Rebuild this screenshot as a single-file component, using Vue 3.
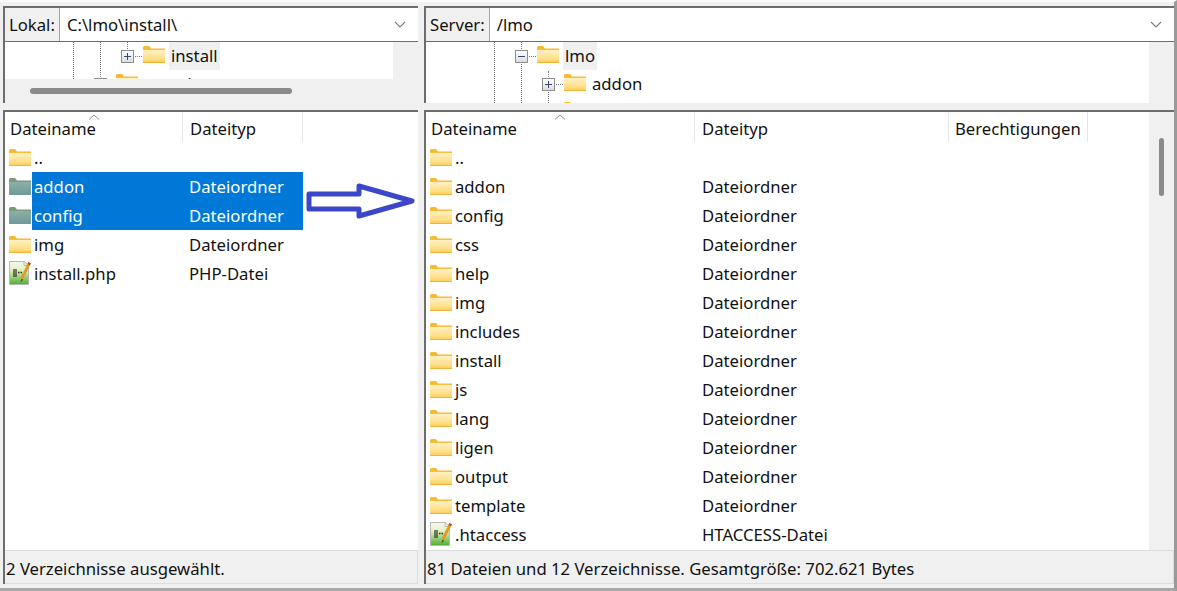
<script setup>
const localFiles = [
  { name: '..', type: '', icon: 'folder' },
  { name: 'addon', type: 'Dateiordner', icon: 'folder', selected: true },
  { name: 'config', type: 'Dateiordner', icon: 'folder', selected: true },
  { name: 'img', type: 'Dateiordner', icon: 'folder' },
  { name: 'install.php', type: 'PHP-Datei', icon: 'file' }
];

const serverFiles = [
  { name: '..', type: '', icon: 'folder' },
  ...['addon', 'config', 'css', 'help', 'img', 'includes', 'install', 'js', 'lang', 'ligen', 'output', 'template'].map(name => ({
    name,
    type: 'Dateiordner',
    icon: 'folder'
  })),
  { name: '.htaccess', type: 'HTACCESS-Datei', icon: 'file' }
];
</script>

<template>
  <div class="window">
    <svg class="defs" width="0" height="0">
      <defs>
        <linearGradient id="fold" x1="0" y1="0" x2="0" y2="1">
          <stop offset="0" stop-color="#fff3cf" />
          <stop offset="0.7" stop-color="#ffdf85" />
          <stop offset="1" stop-color="#fbc94f" />
        </linearGradient>
        <linearGradient id="foldSel" x1="0" y1="0" x2="0" y2="1">
          <stop offset="0" stop-color="#8fb0a8" />
          <stop offset="1" stop-color="#6f9a9a" />
        </linearGradient>
        <linearGradient id="sheet" x1="0" y1="0" x2="0" y2="1">
          <stop offset="0" stop-color="#f7f7f2" />
          <stop offset="0.35" stop-color="#e6f2c4" />
          <stop offset="1" stop-color="#4fae30" />
        </linearGradient>
        <symbol id="folder" viewBox="0 0 22 17">
          <path d="M0 1.5Q0 0 1.5 0H6L8 2.5H22V5H0Z" fill="#f7b92f" />
          <path d="M0 3H22V17H0Z" fill="url(#fold)" />
          <path d="M0 16H22V17H0Z" fill="#efb43a" />
          <path d="M0 3H22V4H0Z" fill="#f7bd3c" />
        </symbol>
        <symbol id="folderSel" viewBox="0 0 22 17">
          <path d="M0 1.5Q0 0 1.5 0H6L8 2.5H22V5H0Z" fill="#7a9a7c" />
          <path d="M0 3H22V17H0Z" fill="url(#foldSel)" />
          <path d="M0 3H22V4H0Z" fill="#7b9a80" />
        </symbol>
        <symbol id="file" viewBox="0 0 22 24">
          <path d="M0.5 0.5H15L19.5 4.5V23.5H0.5Z" fill="url(#sheet)" stroke="#b8b8b8" />
          <path d="M15 0.5V4.5H19.5" fill="none" stroke="#b8b8b8" />
          <path d="M5 8V16M7 8V16" stroke="#2d2d2d" stroke-width="1.2" />
          <path d="M9 11.5H13" stroke="#2d2d2d" stroke-width="1.4" stroke-dasharray="1.5 1" />
          <path d="M20.5 2L12.5 18" stroke="#e09a22" stroke-width="2.8" />
          <path d="M12.5 18L11.5 21L14.2 18.8Z" fill="#333" />
          <path d="M20.7 1.6L19.7 3.6" stroke="#c8402c" stroke-width="2.8" />
        </symbol>
      </defs>
    </svg>

    <section class="pane top">
      <div class="address">
        <span class="address-label">Lokal:</span>
        <div class="address-field">
          <span>C:\lmo\install\</span>
          <svg class="chevron" width="12" height="7" viewBox="0 0 12 7"><path d="M1 1L6 6L11 1" fill="none" stroke="#7a7a7a" stroke-width="1.1" /></svg>
        </div>
      </div>
      <div class="tree-area">
        <div class="tree local-tree">
          <i class="vline" style="left: 68px" />
          <i class="vline" style="left: 95px" />
          <i class="vline short" style="left: 122px" />
          <div class="tree-row" style="padding-left: 116px">
            <span class="box">
              <svg width="13" height="13" viewBox="0 0 13 13"><path d="M3 6.5H10M6.5 3V10" stroke="#2f4a78" /></svg>
            </span>
            <i class="hline" />
            <svg class="tree-folder" width="22" height="17"><use href="#folder" /></svg>
            <span class="tree-label active">install</span>
          </div>
          <div class="tree-row" style="padding-left: 89px">
            <span class="box" />
            <i class="hline" />
            <svg class="tree-folder" width="22" height="17"><use href="#folder" /></svg>
            <span class="tree-label">scorpio</span>
          </div>
        </div>
        <div class="vtrack" />
        <div class="htrack"><div class="hthumb" /></div>
      </div>
    </section>

    <section class="pane top">
      <div class="address">
        <span class="address-label">Server:</span>
        <div class="address-field">
          <span>/lmo</span>
          <svg class="chevron" width="12" height="7" viewBox="0 0 12 7"><path d="M1 1L6 6L11 1" fill="none" stroke="#7a7a7a" stroke-width="1.1" /></svg>
        </div>
      </div>
      <div class="tree-area server">
        <div class="tree server-tree">
          <i class="vline" style="left: 68px" />
          <i class="vline" style="left: 95px" />
          <i class="vline lower" style="left: 122px" />
          <div class="tree-row" style="padding-left: 89px">
            <span class="box">
              <svg width="13" height="13" viewBox="0 0 13 13"><path d="M3 6.5H10" stroke="#2f4a78" /></svg>
            </span>
            <i class="hline" />
            <svg class="tree-folder" width="22" height="17"><use href="#folder" /></svg>
            <span class="tree-label active">lmo</span>
          </div>
          <div class="tree-row" style="padding-left: 116px">
            <span class="box">
              <svg width="13" height="13" viewBox="0 0 13 13"><path d="M3 6.5H10M6.5 3V10" stroke="#2f4a78" /></svg>
            </span>
            <i class="hline" />
            <svg class="tree-folder" width="22" height="17"><use href="#folder" /></svg>
            <span class="tree-label">addon</span>
          </div>
          <div class="tree-row" style="padding-left: 116px">
            <span class="box-gap" />
            <svg class="tree-folder" width="22" height="17"><use href="#folder" /></svg>
          </div>
        </div>
        <div class="vtrack" />
      </div>
    </section>

    <section class="pane list local-list">
      <div class="list-body">
        <div class="row head">
          <div class="cell name">Dateiname<svg class="sort" width="12" height="6" viewBox="0 0 12 6"><path d="M1 5.5L6 1L11 5.5" fill="none" stroke="#8a8a8a" /></svg></div>
          <div class="cell type">Dateityp</div>
        </div>
        <div v-for="f in localFiles" :key="f.name" class="row file">
          <div class="icon-cell">
            <svg v-if="f.icon === 'folder'" width="22" height="17"><use :href="f.selected ? '#folderSel' : '#folder'" /></svg>
            <svg v-else width="22" height="24" class="file-icon"><use href="#file" /></svg>
          </div>
          <div class="selection" :class="{ selected: f.selected }">
            <span class="file-name">{{ f.name }}</span>
            <span class="file-type">{{ f.type }}</span>
          </div>
        </div>
      </div>
      <div class="status">2 Verzeichnisse ausgewählt.</div>
    </section>

    <section class="pane list server-list">
      <div class="list-scroll">
        <div class="list-body">
          <div class="row head">
            <div class="cell name">Dateiname<svg class="sort" width="12" height="6" viewBox="0 0 12 6"><path d="M1 5.5L6 1L11 5.5" fill="none" stroke="#8a8a8a" /></svg></div>
            <div class="cell type">Dateityp</div>
            <div class="cell perms">Berechtigungen</div>
          </div>
          <div v-for="f in serverFiles" :key="f.name" class="row file">
            <div class="icon-cell">
              <svg v-if="f.icon === 'folder'" width="22" height="17"><use href="#folder" /></svg>
              <svg v-else width="22" height="24" class="file-icon"><use href="#file" /></svg>
            </div>
            <div class="selection">
              <span class="file-name">{{ f.name }}</span>
              <span class="file-type">{{ f.type }}</span>
            </div>
          </div>
        </div>
        <div class="list-track"><div class="list-thumb" /></div>
      </div>
      <div class="status">81 Dateien und 12 Verzeichnisse. Gesamtgröße: 702.621 Bytes</div>
    </section>

    <svg class="arrow" width="112" height="40" viewBox="0 0 112 40">
      <path d="M5 11H55V3L108 18L55 33V26H5Z" fill="#fff" stroke="#3c46c8" stroke-width="5" stroke-linejoin="round" />
    </svg>
  </div>
</template>

<style scoped>
.window {
  position: relative;
  width: 1177px;
  height: 591px;
  box-sizing: border-box;
  padding: 4px 0 0 3px;
  display: grid;
  grid-template-columns: 415px 750px;
  grid-template-rows: 97px 474px;
  column-gap: 6px;
  row-gap: 7px;
  background: #f0f0f0;
  border-top: 2px solid #fbfbfb;
  border-right: 3px solid #9a9a9a;
  border-bottom: 3px solid #a8a8a8;
  font-family: "Noto Sans", "Open Sans", sans-serif;
  font-size: 16.7px;
  color: #111;
  overflow: hidden;
}

.defs {
  position: absolute;
}

.pane {
  display: flex;
  flex-direction: column;
  min-width: 0;
  min-height: 0;
  border-top: 2px solid #6d6d6d;
  border-left: 2px solid #6d6d6d;
  box-sizing: border-box;
}

.address {
  display: flex;
  height: 33px;
  flex: none;
  border-bottom: 1px solid #6d6d6d;
  background: #fff;
}

.address-label {
  display: flex;
  align-items: center;
  padding: 0 4px 0 4px;
  background: #f0f0f0;
  border-right: 1px solid #a5a5a5;
}

.address-field {
  flex: 1;
  display: flex;
  align-items: center;
  justify-content: space-between;
  padding: 0 12px 0 7px;
}

.tree-area {
  flex: 1;
  position: relative;
  display: grid;
  grid-template-columns: 1fr 25px;
  grid-template-rows: 37px 1fr;
  min-height: 0;
  background: #f0f0f0;
}

.tree-area.server {
  grid-template-rows: 1fr;
}

.tree {
  position: relative;
  overflow: hidden;
  background: #fff;
}

.vline {
  position: absolute;
  top: 0;
  bottom: 0;
  width: 0;
  border-left: 1px dotted #777;
}

.vline.short {
  height: 7px;
  bottom: auto;
}

.vline.lower {
  top: 29px;
}

.tree-row {
  position: relative;
  display: flex;
  align-items: center;
  height: 28px;
}

.box {
  display: block;
  width: 13px;
  height: 13px;
  box-sizing: border-box;
  border: 1px solid #8d8d8d;
  background: linear-gradient(#fff, #dcdcdc);
  flex: none;
}

.box svg {
  display: block;
  margin: -1px;
}

.box-gap {
  width: 22px;
  flex: none;
}

.hline {
  width: 7px;
  margin: 0 1px;
  border-top: 1px dotted #777;
  flex: none;
}

.tree-folder {
  flex: none;
  margin-top: -3px;
}

.tree-label {
  margin-left: 4px;
  padding: 0 2px;
  height: 28px;
  line-height: 28px;
  white-space: nowrap;
}

.tree-label.active {
  background: #f0f0f0;
}

.vtrack {
  background: #f0f0f0;
}

.htrack {
  grid-column: 1 / 3;
  position: relative;
  background: #f0f0f0;
}

.hthumb {
  position: absolute;
  left: 25px;
  top: 9px;
  width: 262px;
  height: 6px;
  border-radius: 3px;
  background: #8a8a8a;
}

.list-body {
  flex: 1;
  min-height: 0;
  overflow: hidden;
  background: #fff;
}

.list-scroll {
  flex: 1;
  min-height: 0;
  display: flex;
}

.list-track {
  position: relative;
  width: 25px;
  flex: none;
  background: #f0f0f0;
}

.list-thumb {
  position: absolute;
  top: 26px;
  left: 10px;
  width: 5px;
  height: 58px;
  border-radius: 3px;
  background: #8a8a8a;
}

.row {
  display: flex;
  height: 29px;
}

.row.head {
  height: 31px;
}

.cell {
  position: relative;
  height: 30px;
  line-height: 33px;
  box-sizing: border-box;
  padding-left: 7px;
  border-right: 1px solid #e5e5e5;
  white-space: nowrap;
}

.local-list .name {
  width: 178px;
  padding-left: 5px;
}

.local-list .type {
  width: 120px;
}

.server-list .name {
  width: 269px;
  padding-left: 5px;
}

.server-list .type {
  width: 254px;
}

.server-list .perms {
  width: 139px;
  padding-left: 6px;
}

.sort {
  position: absolute;
  top: 2px;
  left: 83px;
}

.server-list .sort {
  left: 128px;
}

.icon-cell {
  width: 27px;
  flex: none;
  padding-left: 4px;
  box-sizing: border-box;
  display: flex;
  align-items: center;
}

.file-icon {
  margin-top: -2px;
}

.selection {
  display: flex;
  align-items: center;
  padding-left: 2px;
}

.selection.selected {
  background: #0078d7;
  color: #fff;
}

.file-name {
  display: block;
}

.local-list .file-name {
  width: 155px;
}

.server-list .file-name {
  width: 247px;
}

.local-list .file-type {
  width: 114px;
}

.file-type {
  width: 240px;
}

.status {
  height: 34px;
  flex: none;
  box-sizing: border-box;
  padding-left: 1px;
  line-height: 36px;
  background: #f0f0f0;
  border-top: 1px solid #dcdcdc;
  border-bottom: 1px solid #dcdcdc;
  border-right: 1px solid #dcdcdc;
}

.arrow {
  position: absolute;
  left: 304px;
  top: 181px;
}
</style>

<style>
html, body {
  margin: 0;
  background: #f0f0f0;
}
</style>
